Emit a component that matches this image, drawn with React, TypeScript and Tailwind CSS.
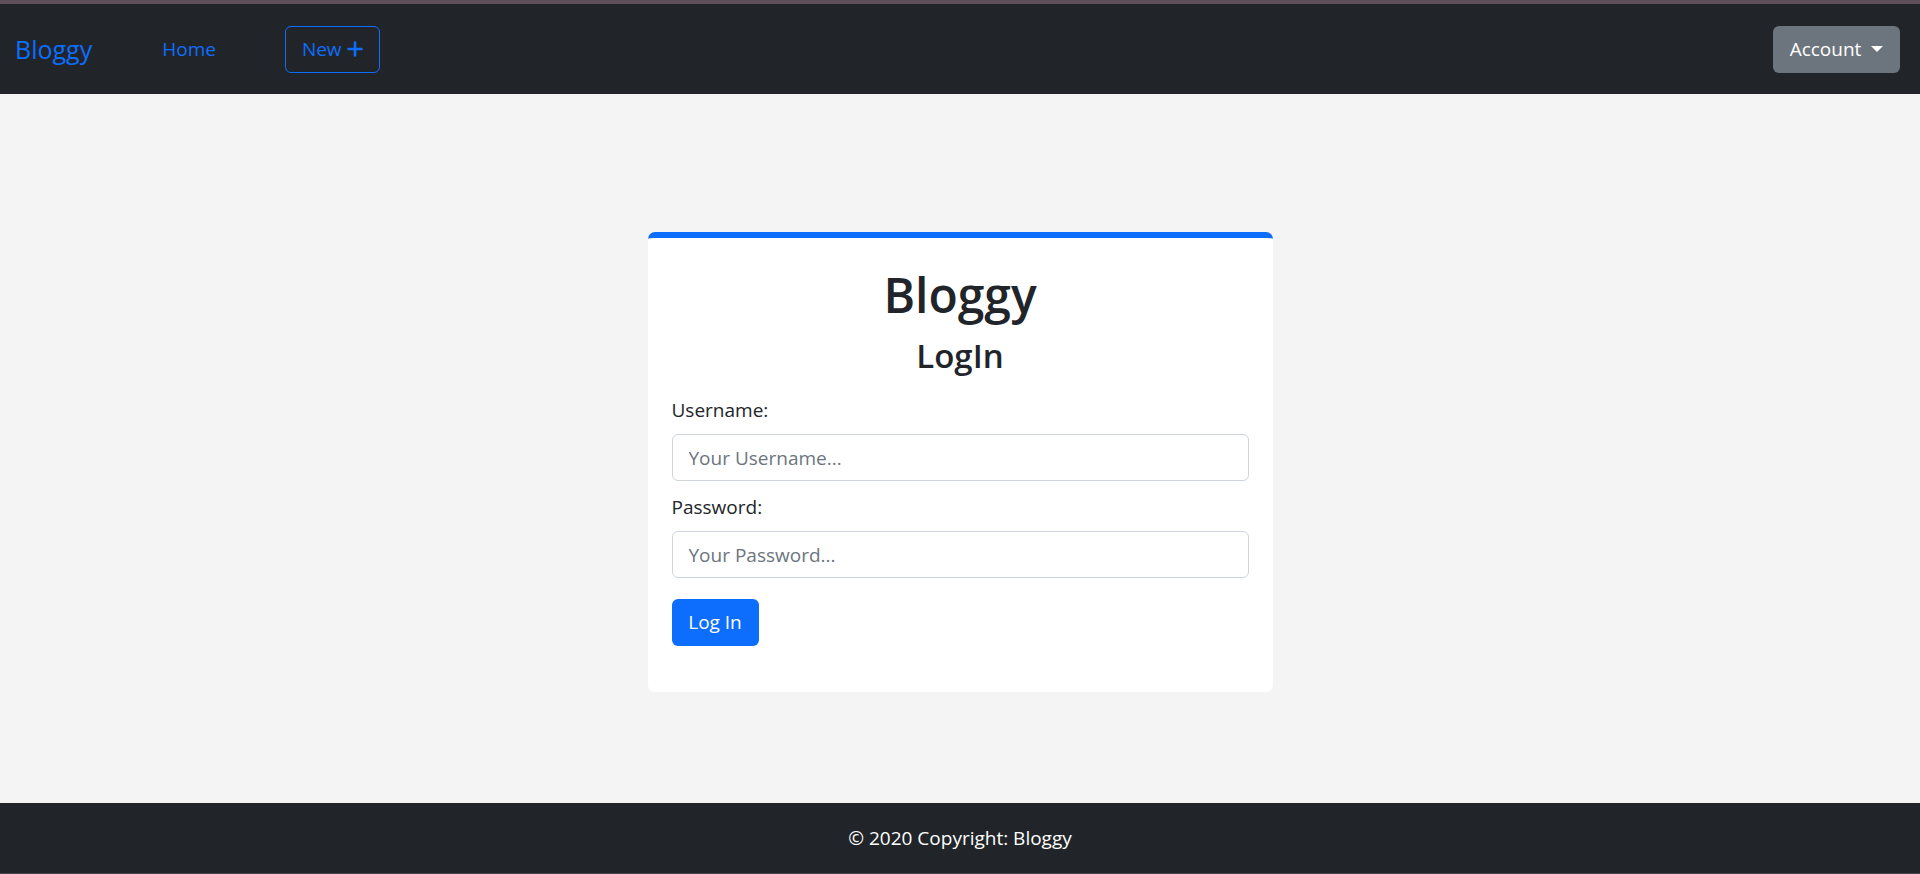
import React from "react";

export default function App() {
  const font = { fontFamily: '"Open Sans", "Noto Sans", sans-serif' };
  return (
    <div className="flex h-[874px] flex-col bg-[#f4f4f4] text-[#212529]" style={font}>
      <div className="h-[4px] bg-[#5f4f5a]" />
      <nav className="flex h-[90px] items-center bg-[#212529] pl-[15px] pr-[20px]">
        <span className="text-[25px] leading-none text-[#0d6efd]">Bloggy</span>
        <span className="ml-[70px] text-[19px] leading-none text-[#0d6efd]">Home</span>
        <button className="ml-[69px] flex h-[47px] items-center gap-[5px] rounded-[6px] border border-[#0d6efd] px-[16px] text-[19px] text-[#0d6efd]">
          <span>New</span>
          <svg width="16" height="16" viewBox="0 0 16 16">
            <path d="M8 1.5v13M1.5 8h13" stroke="#0d6efd" strokeWidth="2.6" strokeLinecap="round" />
          </svg>
        </button>
        <div className="flex-1" />
        <button className="flex h-[47px] w-[127px] items-center justify-center gap-[10px] rounded-[6px] bg-[#6c757d] text-[19px] text-white">
          <span>Account</span>
          <span className="h-0 w-0 border-x-[6px] border-t-[6px] border-x-transparent border-t-white" />
        </button>
      </nav>
      <main className="flex flex-1 justify-center pt-[138px]">
        <div className="h-[460px] w-[625px] rounded-[7px] border-t-[6px] border-[#0d6efd] bg-white px-[24px] pt-[27px]">
          <h1 className="text-center text-[48px] font-semibold leading-[60px]">Bloggy</h1>
          <h3 className="mt-[10px] text-center text-[33px] font-semibold leading-[42px]">LogIn</h3>
          <label className="mt-[18px] block text-[19px] leading-[30px]">Username:</label>
          <input
            className="mt-[9px] block h-[47px] w-full rounded-[6px] border border-[#ced4da] px-[16px] text-[19px] placeholder-[#6c757d] outline-none"
            placeholder="Your Username..."
          />
          <label className="mt-[11px] block text-[19px] leading-[30px]">Password:</label>
          <input
            type="password"
            className="mt-[9px] block h-[47px] w-full rounded-[6px] border border-[#ced4da] px-[16px] text-[19px] placeholder-[#6c757d] outline-none"
            placeholder="Your Password..."
          />
          <button className="mt-[21px] h-[47px] w-[87px] rounded-[6px] bg-[#0d6efd] text-[19px] text-white">Log In</button>
        </div>
      </main>
      <footer className="flex h-[71px] flex-col bg-[#212529] text-[19px] text-white">
        <div className="flex flex-1 items-center justify-center">© 2020 Copyright: Bloggy</div>
        <div className="h-[1px] bg-[#45484c]" />
      </footer>
    </div>
  );
}
